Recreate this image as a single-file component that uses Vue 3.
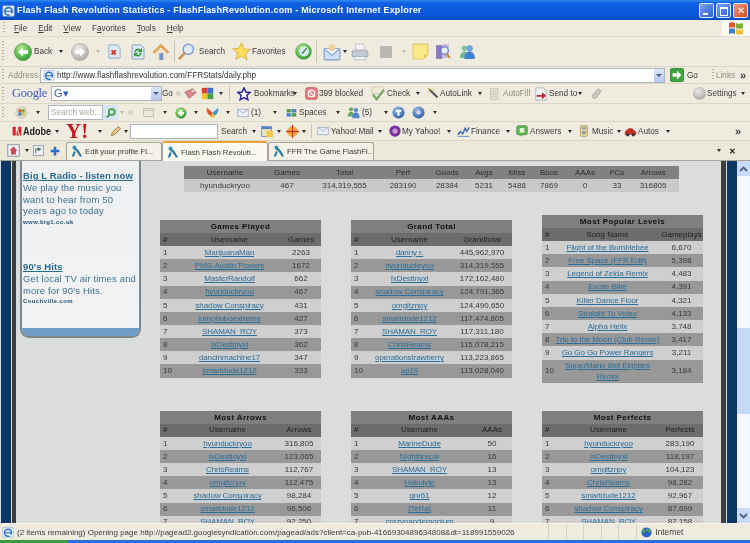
<template>
  <div class="window">
    <svg class="sprite" width="0" height="0" aria-hidden="true">
      <defs>
        <radialGradient id="g-green" cx="40%" cy="30%" r="75%"><stop offset="0" stop-color="#b5ec8e" /><stop offset="1" stop-color="#2b9a28" /></radialGradient>
        <radialGradient id="g-grey" cx="40%" cy="30%" r="75%"><stop offset="0" stop-color="#eeeeee" /><stop offset="1" stop-color="#a9a9a9" /></radialGradient>
        <radialGradient id="g-blue" cx="40%" cy="30%" r="75%"><stop offset="0" stop-color="#9cc0ea" /><stop offset="1" stop-color="#2a5aa5" /></radialGradient>
      </defs>
      <symbol id="i-back" viewBox="0 0 16 16"><circle cx="8" cy="8" r="7.6" fill="url(#g-green)" stroke="#3a8a30" stroke-width=".5" /><path d="M3.5 8 8 4v2.5h4.5v3H8V12z" fill="#fff" /></symbol>
      <symbol id="i-forward" viewBox="0 0 16 16"><circle cx="8" cy="8" r="7.6" fill="url(#g-grey)" stroke="#a0a0a0" stroke-width=".5" /><path d="M12.5 8 8 4v2.5H3.5v3H8V12z" fill="#fff" /></symbol>
      <symbol id="i-stop" viewBox="0 0 16 16"><path d="M2 1h9l3 3v11H2z" fill="#dfe8f6" stroke="#8ea6cc" /><path d="m5.500 6 1.500 1.500L8.500 6 10 7.300 8.500 9l1.500 1.500L8.500 12 7 10.500 5.500 12 4.200 10.500 5.700 9 4.200 7.300z" fill="#d8352a" /></symbol>
      <symbol id="i-refresh" viewBox="0 0 16 16"><path d="M2 1h9l3 3v11H2z" fill="#dfe8f6" stroke="#8ea6cc" /><path d="M4.500 8a3.500 3.500 0 0 1 6-2.400L12 4v4.300H7.800l1.500-1.500A2 2 0 0 0 6 8zm7 1a3.500 3.500 0 0 1-6 2.400L4 13V8.800h4.200l-1.500 1.500A2 2 0 0 0 10 9z" fill="#2f9a35" /></symbol>
      <symbol id="i-home" viewBox="0 0 16 16"><path d="M8 1 1 8l1.500 1L8 4l5.500 5L15 8z" fill="#e8a54e" stroke="#b97a2c" stroke-width=".5" /><path d="M3 8.500 8 4l5 4.500V15H3z" fill="#f2e6c8" /><rect x="6.500" y="9" width="3.500" height="6" fill="#6d94c8" /></symbol>
      <symbol id="i-search" viewBox="0 0 16 16"><circle cx="9.700" cy="6" r="4.800" fill="#dceafa" stroke="#7fa0c9" stroke-width="1.300" /><path d="M6.200 9.500 1.500 14.500" stroke="#c8935a" stroke-width="2.400" stroke-linecap="round" /></symbol>
      <symbol id="i-star" viewBox="0 0 16 16"><path d="m8 .8 2.200 5 5.300.5-4 3.500 1.200 5.300L8 11.900l-4.700 2.700 1.200-5.300-4-3.500 5.300-.5z" fill="#fbdc5c" stroke="#cfa12d" stroke-width=".6" /></symbol>
      <symbol id="i-history" viewBox="0 0 16 16"><circle cx="8" cy="8" r="7.400" fill="url(#g-green)" stroke="#4d8a55" stroke-width=".5" /><circle cx="8.500" cy="8" r="4.600" fill="#d7ebf4" /><path d="M8.500 8 11 5M8.500 8l-2 2" stroke="#2e5a3a" stroke-width="1" /></symbol>
      <symbol id="i-mail" viewBox="0 0 16 16"><rect x="1" y="5" width="14" height="10" rx="1" fill="#cfe0f6" stroke="#7c9ec9" /><path d="m1 5 7 6 7-6" fill="#eef4fc" stroke="#7c9ec9" /><circle cx="8" cy="4" r="3" fill="#f0cf9a" /></symbol>
      <symbol id="i-print" viewBox="0 0 16 16"><path d="M4 1h7l2 5H4z" fill="#f4f4f4" stroke="#a9b0bc" stroke-width=".6" /><path d="M1 7h14v5H1z" fill="#c4cbd6" stroke="#8a93a2" stroke-width=".6" /><path d="M3 12h10v3H3z" fill="#eef0f3" stroke="#a9b0bc" stroke-width=".6" /></symbol>
      <symbol id="i-edit" viewBox="0 0 16 16"><rect x="1" y="1" width="14" height="14" fill="#b9b9b4" stroke="#a3a3a0" /></symbol>
      <symbol id="i-note" viewBox="0 0 16 16"><path d="M1 1h14v10l-4 4H1z" fill="#fbe88c" stroke="#d8b94a" stroke-width=".7" /><path d="m11 15 .3-4H15z" fill="#e2c45a" /></symbol>
      <symbol id="i-research" viewBox="0 0 16 16"><path d="M1 2h6v13H1z" fill="#8a7cc4" /><path d="M7 1h6v13H7z" fill="#c7bbe6" /><circle cx="9" cy="7" r="3.500" fill="#e7eef8" stroke="#5b6fa8" /><path d="m11 10 3 4" stroke="#c88f3a" stroke-width="2" /></symbol>
      <symbol id="i-msn" viewBox="0 0 16 16"><circle cx="5" cy="5" r="2.500" fill="#7fc4a0" /><path d="M1 14c0-4 2-6 4-6s4 2 4 6z" fill="#6fb890" /><circle cx="10" cy="5" r="3" fill="#6aa5e0" /><path d="M5 15c0-5 2.500-7 5-7s5 2 5 7z" fill="#3f80d0" /></symbol>
      <symbol id="i-ie" viewBox="0 0 16 16"><rect x="1" y="2" width="14" height="13" rx="1" fill="#e7f0fb" stroke="#90a9cf" stroke-width=".7" /><circle cx="8" cy="9" r="4.600" fill="none" stroke="#2a72cc" stroke-width="2" /><path d="M3.500 9h9" stroke="#2a72cc" stroke-width="1.500" /><path d="M9 11.500h5v2H9z" fill="#e7f0fb" /></symbol>
      <symbol id="i-go" viewBox="0 0 16 16"><rect x=".5" y=".5" width="15" height="15" rx="2" fill="#3fa63f" stroke="#2c7f2c" /><path d="M8 3l5 5-5 5v-3H3V6h5z" fill="#fff" /></symbol>
      <symbol id="i-tag" viewBox="0 0 16 16"><path d="M1 6 11 2l4 5-9 7z" fill="#d88a8a" stroke="#a05a5a" stroke-width=".7" /><circle cx="11" cy="5" r="1.200" fill="#fff" /></symbol>
      <symbol id="i-cube" viewBox="0 0 16 16"><rect x="1" y="1" width="7" height="7" fill="#d8412f" /><rect x="8" y="1" width="7" height="7" fill="#3a6ed0" /><rect x="1" y="8" width="7" height="7" fill="#f2c22e" /><rect x="8" y="8" width="7" height="7" fill="#43a047" /></symbol>
      <symbol id="i-bookmark" viewBox="0 0 16 16"><path d="m8 1 2.100 4.700 5 .5-3.800 3.300 1.100 5L8 12l-4.400 2.500 1.100-5L.9 6.200l5-.5z" fill="#fff" stroke="#28259c" stroke-width="1.700" /></symbol>
      <symbol id="i-blocked" viewBox="0 0 16 16"><rect x="1" y="1" width="14" height="14" rx="2" fill="#e8868a" stroke="#bd3b42" /><circle cx="8" cy="8" r="4" fill="none" stroke="#fff" stroke-width="1.500" /><path d="m5 5 6 6" stroke="#fff" stroke-width="1.500" /></symbol>
      <symbol id="i-check" viewBox="0 0 16 16"><rect x="1" y="1" width="12" height="7" fill="#ece9d8" stroke="#b8b49c" stroke-width=".5" /><path d="m2 9 4 5L14 4" fill="none" stroke="#78a868" stroke-width="2.400" /></symbol>
      <symbol id="i-wand" viewBox="0 0 16 16"><path d="m3 3 10 10" stroke="#555" stroke-width="2.400" /><path d="M2 1 3 3 1 2M7 2l1 1M2 7l1 1" stroke="#d4b03a" stroke-width="1.300" /></symbol>
      <symbol id="i-fill" viewBox="0 0 16 16"><rect x="2" y="1" width="10" height="14" fill="#e2e0d2" stroke="#c3c0ae" /><path d="M4 5h6M4 8h6M4 11h6" stroke="#c3c0ae" /></symbol>
      <symbol id="i-send" viewBox="0 0 16 16"><path d="M2 1h9l3 3v11H2z" fill="#f4f4f4" stroke="#aab0bc" /><path d="M3 9h6V6l5 4-5 4v-3H3z" fill="#c9232e" /></symbol>
      <symbol id="i-eraser" viewBox="0 0 16 16"><path d="m2 11 8-9 4 3-7 9H4z" fill="#c9c8bf" stroke="#aeada2" /></symbol>
      <symbol id="i-settings" viewBox="0 0 16 16"><circle cx="8" cy="8" r="7.500" fill="url(#g-grey)" stroke="#9c9c9c" stroke-width=".5" /></symbol>
      <symbol id="i-vista" viewBox="0 0 16 16"><circle cx="8" cy="8" r="7" fill="#e3e0cf" stroke="#a8a594" stroke-width=".6" /><rect x="4" y="4" width="4" height="4" fill="#d86a3a" /><rect x="8" y="4" width="4" height="4" fill="#7aa84a" /><rect x="4" y="8" width="4" height="4" fill="#4a80c8" /><rect x="8" y="8" width="4" height="4" fill="#e2c040" /></symbol>
      <symbol id="i-find" viewBox="0 0 16 16"><circle cx="9" cy="6.500" r="4" fill="none" stroke="#2f9a35" stroke-width="2" /><path d="M6 10 2.500 14" stroke="#2f9a35" stroke-width="2.400" /></symbol>
      <symbol id="i-box" viewBox="0 0 16 16"><rect x="1" y="2" width="14" height="12" fill="#eceadc" stroke="#b3b0a0" /><path d="M1 5h14" stroke="#b3b0a0" /></symbol>
      <symbol id="i-plusg" viewBox="0 0 16 16"><circle cx="8" cy="8" r="7" fill="url(#g-green)" stroke="#3d9a3d" stroke-width=".7" /><path d="M8 4v8M4 8h8" stroke="#fff" stroke-width="3" /></symbol>
      <symbol id="i-fly" viewBox="0 0 16 16"><path d="M8 8 1 2c-1 6 2 9 7 11z" fill="#e0552f" /><path d="m8 8 7-6c1 6-2 9-7 11z" fill="#3f9fd0" /><path d="M8 8 5 14h6z" fill="#f0c030" /></symbol>
      <symbol id="i-mailb" viewBox="0 0 16 16"><rect x="1" y="3" width="14" height="10" fill="#e8eef6" stroke="#96aac4" /><path d="m1 3 7 5 7-5" fill="none" stroke="#96aac4" /></symbol>
      <symbol id="i-spaces" viewBox="0 0 16 16"><rect x="1" y="3" width="6" height="5" fill="#4f9a4f" /><rect x="8" y="3" width="7" height="5" fill="#4f82c4" /><rect x="1" y="9" width="6" height="5" fill="#4f82c4" /><rect x="8" y="9" width="7" height="5" fill="#4f9a4f" /></symbol>
      <symbol id="i-people" viewBox="0 0 16 16"><circle cx="5" cy="4" r="2.600" fill="#62a862" /><path d="M1 13c0-4 2-6 4-6s4 2 4 6z" fill="#62a862" /><circle cx="11" cy="5" r="2.600" fill="#4f86cc" /><path d="M6.500 15c0-5 2-7 4.500-7s4.500 2 4.500 7z" fill="#4f86cc" /></symbol>
      <symbol id="i-tcirc" viewBox="0 0 16 16"><circle cx="8" cy="8" r="7.400" fill="url(#g-blue)" /><path d="M4.500 5h7v2.200H9.200V12H6.800V7.200H4.500z" fill="#fff" /></symbol>
      <symbol id="i-help" viewBox="0 0 16 16"><circle cx="8" cy="8" r="7.400" fill="url(#g-blue)" /><circle cx="8" cy="8" r="2.600" fill="#d9d4f4" /></symbol>
      <symbol id="i-adobe" viewBox="0 0 16 16"><path d="M1 1h5v14H1zM10 1h5v14h-2L10 7zM8 6l3 9H7z" fill="#d4262c" /></symbol>
      <symbol id="i-pencil" viewBox="0 0 16 16"><path d="m3 10 8-8 3 3-8 8-4 1z" fill="#efc98a" stroke="#7a5b2a" /></symbol>
      <symbol id="i-win" viewBox="0 0 16 16"><rect x="2" y="2" width="12" height="12" fill="#ece5b8" stroke="#5d82c2" /><rect x="2" y="2" width="12" height="3" fill="#5d82c2" /><rect x="8" y="7" width="8" height="8" fill="#f3c74a" /></symbol>
      <symbol id="i-target" viewBox="0 0 16 16"><circle cx="8" cy="8" r="6.500" fill="#f1b03a" /><path d="M8 0v16M0 8h16" stroke="#c9352a" stroke-width="1.600" /></symbol>
      <symbol id="i-my" viewBox="0 0 16 16"><circle cx="8" cy="8" r="7.500" fill="#7a2fa0" /><circle cx="8" cy="8" r="3.500" fill="#c79ad8" /></symbol>
      <symbol id="i-finance" viewBox="0 0 16 16"><path d="M1 14h14" stroke="#4a7ec4" /><path d="m1 12 3-4 3 3 3-7 2 4 3-5" fill="none" stroke="#2a62b4" stroke-width="1.600" /></symbol>
      <symbol id="i-answers" viewBox="0 0 16 16"><rect x="1" y="1" width="14" height="12" rx="2" fill="#62b552" stroke="#3f8a3a" /><path d="M5 13v3l4-3z" fill="#62b552" /><rect x="5" y="4" width="6" height="6" fill="#e5f5d8" /></symbol>
      <symbol id="i-music" viewBox="0 0 16 16"><rect x="2" y="1" width="9" height="14" rx="1" fill="#f0dc9a" stroke="#9b8a4a" /><circle cx="6.500" cy="10" r="2.500" fill="#8a9ab8" /><rect x="4" y="3" width="5" height="3" fill="#8a9ab8" /></symbol>
      <symbol id="i-car" viewBox="0 0 16 16"><path d="M1 9 3 6l3-2h4l3 3 2 1v4H1z" fill="#c2302a" /><circle cx="4.500" cy="12" r="2" fill="#333" /><circle cx="11.500" cy="12" r="2" fill="#333" /></symbol>
      <symbol id="i-tabhome" viewBox="0 0 16 16"><rect x="1" y="1" width="14" height="14" fill="#f0f3f8" stroke="#74849c" /><path d="M8 3 3 8h2v5h6V8h2z" fill="#c84a55" /></symbol>
      <symbol id="i-tablist" viewBox="0 0 16 16"><rect x="1" y="1" width="14" height="14" fill="#f0f3f8" stroke="#74849c" /><path d="M4 12V6h7M7 4l4 2-4 3" fill="none" stroke="#3f7a58" stroke-width="1.500" /></symbol>
      <symbol id="i-plus" viewBox="0 0 16 16"><path d="M6 1h4v5h5v4h-5v5H6v-5H1V6h5z" fill="#2a6cc8" /></symbol>
      <symbol id="i-ffr" viewBox="0 0 16 16"><circle cx="5.500" cy="3" r="2.400" fill="#3a8fb0" /><path d="M4 5 8 8l4 6h3l-4-7-3-3zM5 7l-3 7h3l2-5z" fill="#2f7fa4" /></symbol>
      <symbol id="i-globe" viewBox="0 0 16 16"><circle cx="8" cy="8" r="7.400" fill="#2a62c0" /><path d="M3 4c3-1 4 1 3 3s-3 0-3 3c-1-2-1-4 0-6zM9 2c3 0 5 3 4 6-2 0-2-2-4-2s-2-3 0-4z" fill="#4fa84a" /></symbol>
    </svg>

    <div class="titlebar">
      <svg width="13" height="13"><use href="#i-ie" /></svg>
      <span class="title">Flash Flash Revolution Statistics - FlashFlashRevolution.com - Microsoft Internet Explorer</span>
      <div class="win-buttons">
        <div class="win-btn"><i class="min-mark"></i></div>
        <div class="win-btn"><i class="max-mark"></i></div>
        <div class="win-btn close">✕</div>
      </div>
    </div>

    <div class="menubar">
      <i class="grip"></i>
      <span v-for="m in menus" :key="m.u" class="menu-item">{{ m.a }}<u>{{ m.u }}</u>{{ m.b }}</span>
      <div class="flag">
        <svg width="16" height="14" viewBox="0 0 16 14">
          <path d="M1 2c2-1 4-1 6 0v5C5 6 3 6 1 7z" fill="#e0562a" />
          <path d="M8 2c2 1 5 1 7 0v5c-2 1-5 1-7 0z" fill="#7ab040" />
          <path d="M1 8c2-1 4-1 6 0v5c-2-1-4-1-6 0z" fill="#3f7fd0" />
          <path d="M8 8c2 1 5 1 7 0v5c-2 1-5 1-7 0z" fill="#f2c030" />
        </svg>
      </div>
    </div>

    <div v-for="bar in bars" :key="bar.id" class="bar" :class="bar.id">
      <div
        v-for="(p, i) in bar.items"
        :key="i"
        class="piece"
        :class="p.k"
        :style="{ width: p.w + 'px' }"
      >
        <svg v-if="p.i" :width="p.s || 13" :height="p.s || 13"><use :href="'#i-' + p.i" /></svg>
        <span v-if="p.t" class="label">{{ p.t }}</span>
        <i v-if="p.drop" class="drop"></i>
      </div>
    </div>

    <div class="content">
      <div class="stripes-left"><i class="navy"></i><i class="dark"></i></div>

      <aside class="ads">
        <div class="ad">
          <a class="ad-title">Big L Radio - listen now</a>
          <p class="ad-text">We play the music you want to hear from 50 years ago to today</p>
          <span class="ad-url">www.big1.co.uk</span>
        </div>
        <div class="ad">
          <a class="ad-title">90's Hits</a>
          <p class="ad-text">Get local TV air times and more for 90's Hits.</p>
          <span class="ad-url">Couchville.com</span>
        </div>
        <div class="ads-foot"></div>
      </aside>

      <main class="stats">
        <div class="summary">
          <div class="sum-row sum-head">
            <span v-for="(h, i) in summary.head" :key="h" :style="{ width: summary.widths[i] + 'px' }">{{ h }}</span>
          </div>
          <div class="sum-row sum-body">
            <span v-for="(v, i) in summary.values" :key="i" :style="{ width: summary.widths[i] + 'px' }">{{ v }}</span>
          </div>
        </div>

        <div class="boards">
          <section v-for="t in tables" :key="t.title" class="board">
            <div class="board-title">{{ t.title }}</div>
            <div class="row board-head" :style="{ gridTemplateColumns: t.cols }">
              <span class="num">#</span><span>{{ t.name }}</span><span>{{ t.value }}</span>
            </div>
            <div
              v-for="(r, i) in t.rows"
              :key="i"
              class="row"
              :class="i % 2 ? 'even' : 'odd'"
              :style="{ gridTemplateColumns: t.cols }"
            >
              <span class="num">{{ i + 1 }}</span>
              <a class="link">{{ r[0] }}</a>
              <span>{{ r[1] }}</span>
            </div>
          </section>
        </div>
      </main>

      <div class="stripes-right"><i class="dark"></i><i class="navy"></i></div>

      <div class="scrollbar">
        <div class="sb-btn">
          <svg width="9" height="6" viewBox="0 0 9 6"><path d="M1 5 4.500 1.500 8 5" fill="none" stroke="#4d6185" stroke-width="1.800" /></svg>
        </div>
        <div class="sb-track">
          <div class="sb-thumb"></div>
        </div>
        <div class="sb-btn">
          <svg width="9" height="6" viewBox="0 0 9 6"><path d="M1 1 4.500 4.500 8 1" fill="none" stroke="#4d6185" stroke-width="1.800" /></svg>
        </div>
      </div>
    </div>

    <div class="statusbar">
      <svg width="12" height="12"><use href="#i-ie" /></svg>
      <span class="status-text">(2 items remaining) Opening page http://pagead2.googlesyndication.com/pagead/ads?client=ca-pub-4166930489634808&amp;dt=118991559026</span>
      <i v-for="n in 5" :key="n" class="status-cell"></i>
      <div class="zone">
        <svg width="11" height="11"><use href="#i-globe" /></svg>
        <span>Internet</span>
      </div>
    </div>
    <div class="taskbar"><i class="start"></i></div>
  </div>
</template>

<script setup>
const menus = [
  { a: "", u: "F", b: "ile" },
  { a: "", u: "E", b: "dit" },
  { a: "", u: "V", b: "iew" },
  { a: "F", u: "a", b: "vorites" },
  { a: "", u: "T", b: "ools" },
  { a: "", u: "H", b: "elp" },
];

// every piece knows where it starts, its width is the distance to the next one
const lay = (list) =>
  list.map((p, i) => ({
    ...p,
    w: (list[i + 1] ? list[i + 1].x : p.x + (p.end || 12)) - p.x,
  }));

const bars = [
  {
    id: "main",
    items: lay([
      { x: 2, k: "grip" },
      { x: 14, i: "back", s: 18 },
      { x: 34, t: "Back" },
      { x: 57, k: "arrow" },
      { x: 71, i: "forward", s: 18 },
      { x: 94, k: "arrow faint" },
      { x: 107, i: "stop", s: 15 },
      { x: 130, i: "refresh", s: 16 },
      { x: 152, i: "home", s: 18 },
      { x: 174, k: "sep" },
      { x: 178, i: "search", s: 17 },
      { x: 199, t: "Search" },
      { x: 232, i: "star", s: 19 },
      { x: 252, t: "Favorites" },
      { x: 295, i: "history", s: 17 },
      { x: 316, k: "sep" },
      { x: 323, i: "mail", s: 18 },
      { x: 341, k: "arrow" },
      { x: 351, i: "print", s: 18 },
      { x: 380, i: "edit", s: 12 },
      { x: 400, k: "arrow faint" },
      { x: 412, i: "note", s: 17 },
      { x: 435, i: "research", s: 17 },
      { x: 459, i: "msn", s: 17, end: 20 },
    ]),
  },
  {
    id: "address",
    items: lay([
      { x: 2, k: "grip" },
      { x: 8, t: "Address", k: "dim" },
      { x: 40, k: "field url", i: "ie", s: 12, t: "http://www.flashflashrevolution.com/FFRStats/daily.php", drop: true },
      { x: 665, k: "gap" },
      { x: 670, i: "go", s: 14 },
      { x: 687, t: "Go" },
      { x: 712, k: "grip" },
      { x: 716, t: "Links", k: "dim" },
      { x: 740, t: "»", k: "chev", end: 10 },
    ]),
  },
  {
    id: "google",
    items: lay([
      { x: 2, k: "grip" },
      { x: 12, t: "Google", k: "google-logo" },
      { x: 51, k: "field gfield", t: "G▾", drop: true },
      { x: 162, t: "Go" },
      { x: 176, k: "dots" },
      { x: 184, i: "tag", s: 13 },
      { x: 201, i: "cube", s: 13 },
      { x: 217, k: "arrow" },
      { x: 229, k: "sep" },
      { x: 237, i: "bookmark", s: 14 },
      { x: 254, t: "Bookmarks" },
      { x: 291, k: "arrow" },
      { x: 305, i: "blocked", s: 13 },
      { x: 319, t: "399 blocked" },
      { x: 371, i: "check", s: 15 },
      { x: 387, t: "Check" },
      { x: 414, k: "arrow" },
      { x: 427, i: "wand", s: 13 },
      { x: 440, t: "AutoLink" },
      { x: 476, k: "arrow" },
      { x: 489, i: "fill", s: 12 },
      { x: 503, t: "AutoFill", k: "dim" },
      { x: 534, i: "send", s: 14 },
      { x: 549, t: "Send to" },
      { x: 576, k: "arrow" },
      { x: 590, i: "eraser", s: 13 },
      { x: 693, i: "settings", s: 13 },
      { x: 707, t: "Settings" },
      { x: 739, k: "arrow", end: 8 },
    ]),
  },
  {
    id: "yahoo",
    items: lay([
      { x: 2, k: "grip" },
      { x: 15, i: "vista", s: 13 },
      { x: 34, k: "arrow" },
      { x: 48, k: "field ysearch", t: "Search web..." },
      { x: 103, k: "find", i: "find", s: 12 },
      { x: 118, k: "arrow faint" },
      { x: 128, k: "dots" },
      { x: 143, i: "box", s: 11 },
      { x: 161, k: "arrow" },
      { x: 175, i: "plusg", s: 12 },
      { x: 192, k: "arrow" },
      { x: 206, i: "fly", s: 13 },
      { x: 224, k: "arrow" },
      { x: 237, i: "mailb", s: 12 },
      { x: 251, t: "(1)" },
      { x: 271, k: "arrow" },
      { x: 286, i: "spaces", s: 11 },
      { x: 299, t: "Spaces" },
      { x: 334, k: "arrow" },
      { x: 347, i: "people", s: 13 },
      { x: 362, t: "(5)" },
      { x: 382, k: "arrow" },
      { x: 392, i: "tcirc", s: 13 },
      { x: 412, i: "help", s: 13 },
      { x: 431, k: "arrow", end: 8 },
    ]),
  },
  {
    id: "adobe",
    items: lay([
      { x: 12, i: "adobe", s: 10 },
      { x: 23, t: "Adobe", k: "adobe-logo" },
      { x: 53, k: "arrow" },
      { x: 66, t: "Y!", k: "yahoo-logo" },
      { x: 96, k: "arrow" },
      { x: 110, i: "pencil", s: 12 },
      { x: 122, k: "arrow" },
      { x: 130, k: "field" },
      { x: 218, k: "gap" },
      { x: 221, t: "Search" },
      { x: 250, k: "arrow" },
      { x: 260, i: "win", s: 13 },
      { x: 275, k: "arrow" },
      { x: 286, i: "target", s: 13 },
      { x: 300, k: "arrow" },
      { x: 311, k: "sep" },
      { x: 317, i: "mailb", s: 12 },
      { x: 331, t: "Yahoo! Mail" },
      { x: 376, k: "arrow" },
      { x: 389, i: "my", s: 12 },
      { x: 402, t: "My Yahoo!" },
      { x: 445, k: "arrow" },
      { x: 457, i: "finance", s: 13 },
      { x: 471, t: "Finance" },
      { x: 504, k: "arrow" },
      { x: 516, i: "answers", s: 12 },
      { x: 530, t: "Answers" },
      { x: 566, k: "arrow" },
      { x: 579, i: "music", s: 12 },
      { x: 592, t: "Music" },
      { x: 615, k: "arrow" },
      { x: 624, i: "car", s: 13 },
      { x: 638, t: "Autos" },
      { x: 664, k: "arrow" },
      { x: 735, t: "»", k: "chev", end: 10 },
    ]),
  },
  {
    id: "tabs",
    items: lay([
      { x: 7, i: "tabhome", s: 13 },
      { x: 23, k: "arrow" },
      { x: 33, i: "tablist", s: 11 },
      { x: 50, i: "plus", s: 10 },
      { x: 66, k: "tab", i: "ffr", s: 13, t: "Edit your profile Fl..." },
      { x: 162, k: "tab active", i: "ffr", s: 13, t: "Flash Flash Revoluti..." },
      { x: 268, k: "tab", i: "ffr", s: 13, t: "FFR The Game FlashFl..." },
      { x: 374, k: "tab-rest" },
      { x: 715, k: "arrow" },
      { x: 729, t: "✕", k: "tab-close", end: 12 },
    ]),
  },
];

const summary = {
  head: ["Username", "Games", "Total", "Perf", "Goods", "Avgs", "Miss", "Boos", "AAAs", "FCs", "Arrows"],
  values: ["hyunduckryoo", "467", "314,319,555", "283190", "28384", "5231", "5488", "7869", "0", "33", "316805"],
  widths: [82, 42, 73, 44, 44, 30, 36, 28, 44, 20, 52],
};

const tables = [
  {
    title: "Games Played",
    name: "Username",
    value: "Games",
    cols: "18px 103px 40px",
    rows: [
      ["MarijuanaMan", "2263"],
      ["PMS-Austin Powers", "1672"],
      ["MasterRandolf", "662"],
      ["hyunduckryoo", "467"],
      ["shadow Conspiracy", "431"],
      ["lumphoboextreme", "427"],
      ["SHAMAN_ROY", "373"],
      ["IxDestinyxl", "362"],
      ["dancinmachine17", "347"],
      ["smartdude1212", "333"],
    ],
  },
  {
    title: "Grand Total",
    name: "Username",
    value: "Grandtotal",
    cols: "16px 85px 60px",
    rows: [
      ["danny r.", "445,962,970"],
      ["hyunduckryoo", "314,319,555"],
      ["IxDestinyxl", "172,162,480"],
      ["shadow Conspiracy", "124,791,365"],
      ["omgitznpy", "124,490,650"],
      ["smartdude1212", "117,474,805"],
      ["SHAMAN_ROY", "117,311,180"],
      ["ChrisReams", "115,078,215"],
      ["operationstrawberry", "113,223,865"],
      ["ap19", "113,028,040"],
    ],
  },
  {
    title: "Most Popular Levels",
    name: "Song Name",
    value: "Gameplays",
    cols: "13px 105px 43px",
    rows: [
      ["Flight of the Bumblebee", "6,670"],
      ["Free Space (FFR Edit)", "5,398"],
      ["Legend of Zelda Remix", "4,483"],
      ["Excite Bike", "4,391"],
      ["Killer Dance Floor", "4,321"],
      ["Straight To Video", "4,133"],
      ["Alpha Helix", "3,748"],
      ["Trip to the Moon (Club Remix)", "3,417"],
      ["Go Go Go Power Rangers", "3,211"],
      ["SuperMario 8bit Eighties\nRemix", "3,184"],
    ],
  },
  {
    title: "Most Arrows",
    name: "Username",
    value: "Arrows",
    cols: "18px 99px 44px",
    rows: [
      ["hyunduckryoo", "316,805"],
      ["IxDestinyxl", "123,065"],
      ["ChrisReams", "112,767"],
      ["omgitznpy", "112,475"],
      ["shadow Conspiracy", "98,284"],
      ["smartdude1212", "96,506"],
      ["SHAMAN_ROY", "92,250"],
    ],
  },
  {
    title: "Most AAAs",
    name: "Username",
    value: "AAAs",
    cols: "16px 105px 40px",
    rows: [
      ["MarineDude", "50"],
      ["Nightfirecat", "16"],
      ["SHAMAN_ROY", "13"],
      ["Hakulyte", "13"],
      ["gnr61", "12"],
      ["[TeRa]", "11"],
      ["crazypandemonium", "9"],
    ],
  },
  {
    title: "Most Perfects",
    name: "Username",
    value: "Perfects",
    cols: "18px 97px 46px",
    rows: [
      ["hyunduckryoo", "283,190"],
      ["IxDestinyxl", "118,197"],
      ["omgitznpy", "104,123"],
      ["ChrisReams", "98,282"],
      ["smartdude1212", "92,967"],
      ["shadow Conspiracy", "87,699"],
      ["SHAMAN_ROY", "87,158"],
    ],
  },
];
</script>

<style>
html,
body {
  margin: 0;
  overflow: hidden;
}
</style>

<style scoped>
.window {
  width: 750px;
  height: 543px;
  display: flex;
  flex-direction: column;
  overflow: hidden;
  background: #ece9d8;
  color: #3a3a3a;
  font-family: "Liberation Sans", Arial, sans-serif;
  font-size: 8.2px;
  filter: blur(0.4px);
}
.sprite {
  position: absolute;
}
svg {
  flex-shrink: 0;
}

/* title bar */
.titlebar {
  height: 20px;
  flex-shrink: 0;
  display: flex;
  align-items: center;
  padding: 0 2px;
  gap: 2px;
  background: linear-gradient(#2f8cf2 0, #0f60e2 3px, #0a58dc 12px, #0a50c8 19px, #0946b8 20px);
}
.title {
  color: #fff;
  font-weight: bold;
  font-size: 9px;
  letter-spacing: 0.2px;
  white-space: nowrap;
}
.win-buttons {
  margin-left: auto;
  display: flex;
  gap: 2px;
}
.win-btn {
  width: 15px;
  height: 15px;
  box-sizing: border-box;
  border: 1px solid #dfe8fa;
  border-radius: 2px;
  background: linear-gradient(135deg, #7aa4f0, #2a5fd8);
  position: relative;
  color: #fff;
  font-size: 10px;
  line-height: 13px;
  text-align: center;
}
.win-btn.close {
  background: linear-gradient(135deg, #ee9a7a, #d8482a);
}
.min-mark {
  position: absolute;
  left: 3px;
  bottom: 2px;
  width: 5px;
  height: 2px;
  background: #fff;
}
.max-mark {
  position: absolute;
  left: 3px;
  top: 3px;
  width: 6px;
  height: 6px;
  border: 1px solid #fff;
  border-top-width: 2px;
}

/* menu */
.menubar {
  height: 17px;
  flex-shrink: 0;
  display: flex;
  align-items: center;
  padding-left: 3px;
  background: #efecdf;
  border-bottom: 1px solid #e2dfce;
  box-sizing: border-box;
}
.menubar .grip {
  width: 2px;
  height: 12px;
  margin-right: 9px;
  background: repeating-linear-gradient(#b5b2a0 0 1px, transparent 1px 3px);
}
.menu-item {
  margin-right: 11px;
}
.flag {
  margin-left: auto;
  width: 28px;
  height: 16px;
  background: #fbfaf4;
  display: flex;
  align-items: center;
  justify-content: center;
}

/* toolbars */
.bar {
  flex-shrink: 0;
  display: flex;
  align-items: center;
  background: #efecdf;
  box-sizing: border-box;
  border-bottom: 1px solid #dad7c6;
  white-space: nowrap;
  padding-left: 2px;
}
.bar.main {
  height: 30px;
}
.bar.address {
  height: 17px;
}
.bar.google {
  height: 20px;
}
.bar.yahoo {
  height: 18px;
}
.bar.adobe {
  height: 19px;
  padding-left: 12px;
}
.bar.tabs {
  height: 20px;
  padding-left: 7px;
  align-items: flex-end;
  background: #ece9d8;
  border-bottom: 1px solid #a5a498;
}
.piece {
  flex-shrink: 0;
  display: flex;
  align-items: center;
  height: 100%;
  box-sizing: border-box;
  position: relative;
}
.piece.grip::before {
  content: "";
  width: 2px;
  height: 70%;
  background: repeating-linear-gradient(#b5b2a0 0 1px, transparent 1px 3px);
}
.piece.sep::before {
  content: "";
  width: 1px;
  height: 75%;
  background: #c9c6b3;
}
.piece.arrow::before {
  content: "";
  margin-left: 2px;
  border-left: 2.5px solid transparent;
  border-right: 2.5px solid transparent;
  border-top: 3px solid #2a2a2a;
}
.piece.arrow.faint::before {
  border-top-color: #bdbaa8;
}
.piece.dots::before {
  content: "";
  width: 5px;
  height: 5px;
  border-radius: 50%;
  background: #d8d5c4;
}
.dim {
  color: #8f8d80;
}
.field {
  height: 15px;
  background: #fff;
  border: 1px solid #b0b4bc;
  gap: 2px;
  padding-left: 2px;
  overflow: hidden;
}
.drop {
  position: absolute;
  right: 0;
  top: 0;
  bottom: 0;
  width: 10px;
  background: linear-gradient(#dce6f8, #b4c8ee);
}
.drop::after {
  content: "";
  position: absolute;
  left: 2px;
  top: 5px;
  border-left: 3px solid transparent;
  border-right: 3px solid transparent;
  border-top: 3px solid #4d6185;
}
.field.url .label {
  color: #333;
}
.gfield .label {
  color: #3f62b8;
  font-size: 11px;
}
.ysearch .label {
  color: #a8a8a0;
}
.piece.find {
  height: 15px;
  background: #d6e4f4;
  justify-content: center;
}
.google-logo .label {
  font-family: "Liberation Serif", serif;
  font-size: 12.5px;
  color: #4060c0;
  letter-spacing: -0.3px;
}
.adobe-logo .label {
  font-weight: bold;
  font-size: 10px;
  color: #222;
  transform: scaleX(0.9);
  transform-origin: left;
}
.yahoo-logo .label {
  font-family: "Liberation Serif", serif;
  font-weight: bold;
  font-size: 21px;
  color: #c4161c;
}
.chev {
  font-weight: bold;
  font-size: 11px;
}
.tab {
  height: 18px;
  margin-top: 1px;
  padding-left: 3px;
  gap: 2px;
  border: 1px solid #a5a498;
  border-bottom: 0;
  border-radius: 3px 3px 0 0;
  background: #f4f2e6;
  overflow: hidden;
  font-size: 7.8px;
  letter-spacing: -0.05px;
}
.tab.active {
  height: 20px;
  margin-bottom: -1px;
  background: #fbfaf1;
  border-top: 2px solid #e8a33c;
  z-index: 1;
}
.tab-close {
  font-weight: bold;
  color: #111;
}

/* page */
.content {
  flex: 1;
  min-height: 0;
  display: flex;
  overflow: hidden;
  background: #dbdcdc;
}
.stripes-left,
.stripes-right {
  flex-shrink: 0;
  display: flex;
  background: #d5dade;
}
.stripes-left {
  width: 17px;
  padding-left: 1px;
  box-sizing: border-box;
}
.stripes-left .navy {
  width: 10px;
  margin-right: 1px;
}
.stripes-left .dark {
  width: 4px;
}
.stripes-right {
  width: 16px;
}
.stripes-right .dark {
  width: 5px;
  margin-right: 1px;
}
.stripes-right .navy {
  width: 10px;
}
.navy {
  background: #0c3763;
}
.dark {
  background: #3e3e3e;
}

.ads {
  width: 121px;
  height: 177px;
  flex-shrink: 0;
  margin-left: 3px;
  box-sizing: border-box;
  padding: 9px 0 0 1px;
  position: relative;
  border: solid #7f868c;
  border-width: 0 2px 2px;
  border-radius: 0 0 9px 9px;
  background: linear-gradient(#eef0f1, #f2f3f4);
}
.ad {
  height: 91px;
  color: #3f7391;
}
.ad-title {
  display: block;
  font-weight: bold;
  font-size: 9.5px;
  letter-spacing: 0.1px;
  line-height: 12px;
  color: #2b6a90;
  text-decoration: underline;
  white-space: nowrap;
}
.ad-text {
  margin: 0;
  font-size: 9.5px;
  line-height: 11.7px;
  letter-spacing: 0.15px;
}
.ad-url {
  display: block;
  font-size: 6px;
  letter-spacing: 0.4px;
  line-height: 10px;
  color: #24557a;
  font-weight: bold;
}
.ads-foot {
  position: absolute;
  left: 0;
  right: 0;
  bottom: 0;
  height: 8px;
  background: #6f9cc6;
  border-radius: 0 0 7px 7px;
}

.stats {
  flex: 1;
  min-width: 0;
  padding: 5px 0 0 19px;
  box-sizing: border-box;
}
.summary {
  width: 495px;
  margin-left: 24px;
}
.sum-row {
  display: flex;
  height: 13px;
  align-items: center;
  text-align: center;
  font-size: 8px;
}
.sum-head {
  background: #818181;
  color: #2e2e2e;
}
.sum-body {
  background: #c9c9c9;
}
.sum-row span {
  flex-shrink: 0;
}
.boards {
  margin-top: 23px;
  display: grid;
  grid-template-columns: repeat(3, 161px);
  column-gap: 30px;
  row-gap: 28px;
  align-items: center;
}
.board-title {
  height: 13px;
  line-height: 13px;
  text-align: center;
  font-weight: bold;
  background: #7f7f7f;
  color: #111;
  font-size: 8px;
  letter-spacing: 0.4px;
}
.row {
  display: grid;
  min-height: 13.17px;
  align-items: center;
  text-align: center;
  font-size: 8px;
  line-height: 11.5px;
}
.board-head {
  background: #6c6c6c;
  color: #1f1f1f;
}
.odd {
  background: #cfcfcf;
}
.even {
  background: #989898;
}
.num {
  text-align: left;
  padding-left: 3px;
}
.link {
  color: #2b6f9c;
  text-decoration: underline;
  white-space: pre;
  letter-spacing: -0.1px;
}

/* scrollbar */
.scrollbar {
  width: 13px;
  flex-shrink: 0;
  display: flex;
  flex-direction: column;
  background: #f4f8fe;
}
.sb-btn {
  height: 15px;
  flex-shrink: 0;
  display: flex;
  align-items: center;
  justify-content: center;
  background: #c9dbf8;
}
.sb-track {
  flex: 1;
  padding-top: 152px;
}
.sb-thumb {
  height: 86px;
  background: #c6d9f6;
}

/* status */
.statusbar {
  height: 17px;
  flex-shrink: 0;
  display: flex;
  align-items: center;
  box-sizing: border-box;
  padding-left: 2px;
  background: #efecdf;
  border-top: 1px solid #f8f6ea;
  white-space: nowrap;
}
.status-text {
  width: 534px;
  flex-shrink: 0;
  padding-left: 3px;
  box-sizing: border-box;
  font-size: 8px;
  overflow: hidden;
}
.status-cell {
  width: 17.5px;
  height: 100%;
  flex-shrink: 0;
  border-left: 1px solid #d6d3c2;
  box-sizing: border-box;
}
.zone {
  display: flex;
  align-items: center;
  gap: 4px;
  height: 100%;
  padding-left: 4px;
  border-left: 1px solid #d6d3c2;
}
.taskbar {
  height: 3px;
  flex-shrink: 0;
  background: #2a6fd8;
}
.start {
  display: block;
  width: 68px;
  height: 3px;
  background: #3f9a3f;
}
</style>
